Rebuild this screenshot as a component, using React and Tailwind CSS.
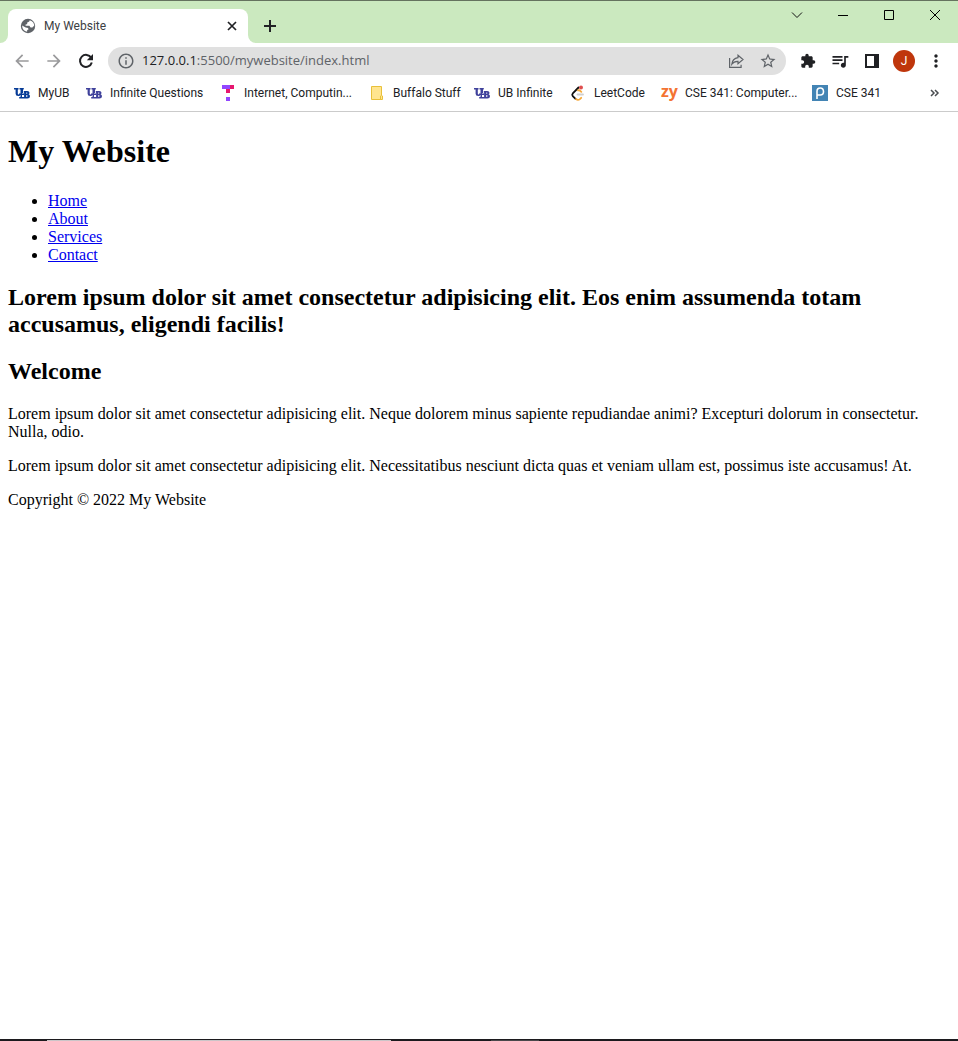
import React from 'react';
import {
  MdArrowBack, MdArrowForward, MdInfoOutline, MdExtension,
  MdStarBorder, MdQueueMusic, MdMoreVert,
} from 'react-icons/md';

const UbIcon = ({ color }) => (
  <svg width="16" height="16" viewBox="0 0 16 16" fill={color}>
    <path d="M0 3h4.500v1.500h-.7v4q0 1 1 1h1V11H4.200Q1.600 11 1.600 8.800V4.500H0z" />
    <path d="M5.500 3h4.300v1.500H9V8H6.500V4.500h-1z" />
    <path d="M5 8.600h5v1.300H5zM6.500 8H8v4H6.500z" />
    <path fillRule="evenodd" d="M9.800 6h3.400q2.300 0 2.300 1.800 0 1-.9 1.500 1.400.5 1.400 1.900 0 2.300-2.600 2.300H5.200V12h4.900V7.400h-.3zm2.500 1.400v1.300h.9V7.400zm0 2.700V12h1v-1.900z" />
  </svg>
);

const TopHatIcon = () => (
  <svg width="16" height="16" viewBox="0 0 16 16">
    <path fill="#9146ff" d="M2 0h8v4H2zM6 12h4v4H6z" />
    <path fill="#e6176f" d="M10 0h4v4h-4zM6 4h4v4H6z" />
  </svg>
);

const FolderIcon = () => (
  <svg width="16" height="16" viewBox="0 0 16 16" fill="#ffe58f" stroke="#e8c03a">
    <path d="M2.500 1.500h10v13h-10z" />
    <path d="M11.500 14.500v-3.500l1-.8 1 .8v3.500z" />
  </svg>
);

const LeetIcon = () => (
  <svg width="16" height="16" viewBox="0 0 16 16" fill="none" strokeWidth="1.800" strokeLinecap="round">
    <path stroke="#111" d="M8.500 2.500 2.800 8.300q-1.200 1.300 0 2.800l2.700 2.700" />
    <path stroke="#f5a83a" d="M6 14.100q2 1.400 3.900 0l1.300-1.300M8 5.400q1.300-.5 2.200.4l1.100 1.100" />
    <path stroke="#cfcfcf" d="M7.500 9.500h5.500" />
    <circle cx="11" cy="2.400" r="2" fill="#df4f4f" />
  </svg>
);

const ZyIcon = () => (
  <span className="w-4 pb-1 font-['Open_Sans',sans-serif] text-base leading-4 font-bold text-[#f47332]">zy</span>
);

const PIcon = () => (
  <svg width="16" height="16" viewBox="0 0 16 16" fill="none">
    <path fill="#4384b4" d="M0 0h16v16H0z" />
    <path stroke="#fff" strokeWidth="1.600" d="M5 14V6.500Q5 3 8.200 3t3.300 3.500-3.300 3.500H5" />
  </svg>
);

const GlobeIcon = () => (
  <svg width="16" height="16" viewBox="0 0 16 16">
    <circle cx="8" cy="8" r="7.200" fill="#5f6368" />
    <path fill="#fff" d="M9.700 2.200Q9.800 3.600 8.400 3.900L7.200 4.600V6L5.400 6.800q-.3 1 .8 1h3.200l1.200 1.600h1.900l.7-1.100 1 .2q.4-4.700-4.500-6.300Z" />
    <path fill="#fff" d="M2.100 7.600 5.700 9.400l2.400.7.400 1.300-1.300.7-.1 1.700Q2.300 12.900 2.100 7.600Z" />
  </svg>
);

const ShareIcon = () => (
  <svg width="16" height="16" viewBox="0 0 16 16" fill="none" stroke="#5f6368" strokeWidth="1.200">
    <path d="M1.600 5v9.400h11.500v-2.700" />
    <path d="M10 2.200 15 6.500l-5 4.300V8.400q-4-.2-6.200 2.800.6-5.600 6.200-6.500Z" />
  </svg>
);

const bookmarks = [
  { label: 'MyUB', width: 'w-[72px]', icon: <UbIcon color="#063b96" /> },
  { label: 'Infinite Questions', width: 'w-[134px]', icon: <UbIcon color="#3f419b" /> },
  { label: 'Internet, Computin...', width: 'w-[149px]', icon: <TopHatIcon /> },
  { label: 'Buffalo Stuff', width: 'w-[105px]', icon: <FolderIcon /> },
  { label: 'UB Infinite', width: 'w-24', icon: <UbIcon color="#3f419b" /> },
  { label: 'LeetCode', width: 'w-[91px]', icon: <LeetIcon /> },
  { label: 'CSE 341: Computer...', width: 'w-[151px]', icon: <ZyIcon /> },
  { label: 'CSE 341', width: 'w-[82px]', icon: <PIcon /> },
];

function TabStrip() {
  return (
    <div className="flex h-[43px] justify-between border-t border-[#65735f] bg-[#cbe9bf]">
      <div className="flex items-end">
        <div className="h-2 w-2 bg-white"><div className="h-2 w-2 rounded-br-lg bg-[#cbe9bf]" /></div>
        <div className="flex h-[34px] w-60 items-center rounded-t-lg bg-white pr-2 pl-3">
          <GlobeIcon />
          <span className="ml-2 grow text-xs text-[#3c4043]">My Website</span>
          <button aria-label="Close tab" className="grid h-4 w-4 place-items-center">
            <svg width="10" height="10" viewBox="0 0 10 10" stroke="#202124" strokeWidth="1.700"><path d="m1 1 8 8M9 1 1 9" /></svg>
          </button>
        </div>
        <div className="h-2 w-2 bg-white"><div className="h-2 w-2 rounded-bl-lg bg-[#cbe9bf]" /></div>
        <button aria-label="New tab" className="grid h-[34px] w-7 place-items-center">
          <svg width="12" height="12" viewBox="0 0 12 12" stroke="#202124" strokeWidth="2"><path d="M6 0v12M0 6h12" /></svg>
        </button>
      </div>
      <div className="flex h-7">
        <button aria-label="Search tabs" className="grid w-[46px] place-items-center">
          <svg width="12" height="12" viewBox="0 0 12 12" fill="none" stroke="#111"><path d="m1 3.500 5 5 5-5" /></svg>
        </button>
        <button aria-label="Minimize" className="grid w-[46px] place-items-center">
          <svg width="10" height="10" viewBox="0 0 10 10" stroke="#000"><path d="M0 5.500h10" /></svg>
        </button>
        <button aria-label="Maximize" className="grid w-[46px] place-items-center">
          <svg width="10" height="10" viewBox="0 0 10 10" fill="none" stroke="#000"><path d="M.5.500h9v9h-9z" /></svg>
        </button>
        <button aria-label="Close" className="grid w-[46px] place-items-center">
          <svg width="10" height="10" viewBox="0 0 10 10" stroke="#000"><path d="m0 0 10 10M10 0 0 10" /></svg>
        </button>
      </div>
    </div>
  );
}

function Toolbar() {
  return (
    <div className="flex h-9 items-center px-3 text-[#202124]">
      <div className="flex gap-3">
        <button aria-label="Back"><MdArrowBack size={20} color="#9a9a9c" /></button>
        <button aria-label="Forward"><MdArrowForward size={20} color="#9a9a9c" /></button>
        <button aria-label="Reload">
          <svg width="20" height="20" viewBox="0 0 20 20">
            <path d="M15.200 6.800A6 6 0 1 0 15.800 11.500" fill="none" stroke="#202124" strokeWidth="2" />
            <path d="M17 3v6.200h-6.200z" fill="#202124" />
          </svg>
        </button>
      </div>
      <div className="ml-3 flex h-7 grow items-center rounded-full bg-[#e0e0e0] px-[9px] text-[#5f6368]">
        <button aria-label="Site information"><MdInfoOutline size={18} /></button>
        <div className="ml-[7px] grow font-['Open_Sans',sans-serif] text-[13px]">
          <span className="text-[#202124]">127.0.0.1</span>:5500/mywebsite/index.html
        </div>
        <div className="flex items-center gap-[15px]">
          <button aria-label="Share"><ShareIcon /></button>
          <button aria-label="Bookmark this page"><MdStarBorder size={18} /></button>
        </div>
      </div>
      <div className="ml-[14px] flex items-center gap-[14px]">
        <button aria-label="Extensions"><MdExtension size={16} /></button>
        <button aria-label="Media"><MdQueueMusic size={20} /></button>
        <button aria-label="Side panel" className="px-px">
          <svg width="14" height="14" viewBox="0 0 14 14"><path fill="#202124" fillRule="evenodd" d="M0 0h14v14H0zM2 2v10h7V2z" /></svg>
        </button>
        <div className="-ml-px flex items-center gap-[11px]">
          <button aria-label="Profile" className="grid h-[22px] w-[22px] place-items-center rounded-full bg-[#bf360c] text-xs text-white">J</button>
          <button aria-label="Menu"><MdMoreVert size={20} /></button>
        </div>
      </div>
    </div>
  );
}

function BookmarksBar() {
  return (
    <div className="flex h-[33px] items-center border-b border-[#cbcbcb] pr-[18px] pb-1 pl-[6px] text-xs text-[#202124]">
      {bookmarks.map(({ label, width, icon }) => (
        <a key={label} href="#" className={`flex shrink-0 items-center gap-2 px-2 whitespace-nowrap ${width}`}>
          <span className="flex h-4 w-4 shrink-0 items-center">{icon}</span>
          {label}
        </a>
      ))}
      <button aria-label="More bookmarks" className="ml-auto">
        <svg width="10" height="8" viewBox="0 0 10 8" fill="none" stroke="#4a4d51" strokeWidth="1.500"><path d="m1 1 3 3-3 3M5 1l3 3-3 3" /></svg>
      </button>
    </div>
  );
}

function Page() {
  return (
    <main className="grow px-2 font-['Liberation_Serif',serif] text-base leading-[18px] text-black">
      <h1 className="mt-[21px] mb-[22px] text-[32px] leading-[37px] font-bold">My Website</h1>
      <ul className="list-disc pl-10">
        {['Home', 'About', 'Services', 'Contact'].map((item) => (
          <li key={item}><a href="#" className="text-[#0000ee] underline">{item}</a></li>
        ))}
      </ul>
      <h2 className="my-5 text-2xl leading-[27px] font-bold">
        Lorem ipsum dolor sit amet consectetur adipisicing elit. Eos enim assumenda totam accusamus, eligendi facilis!
      </h2>
      <h2 className="my-5 text-2xl leading-[27px] font-bold">Welcome</h2>
      <p className="my-4">
        Lorem ipsum dolor sit amet consectetur adipisicing elit. Neque dolorem minus sapiente repudiandae animi? Excepturi dolorum in consectetur. Nulla, odio.
      </p>
      <p className="my-4">
        Lorem ipsum dolor sit amet consectetur adipisicing elit. Necessitatibus nesciunt dicta quas et veniam ullam est, possimus iste accusamus! At.
      </p>
      <p className="my-4">Copyright © 2022 My Website</p>
    </main>
  );
}

export default function App() {
  return (
    <div className="flex min-h-screen flex-col bg-white font-[Roboto,'Open_Sans',sans-serif]">
      <TabStrip />
      <Toolbar />
      <BookmarksBar />
      <Page />
      <div className="h-[2px] bg-[#1c1a1e]">
        <div className="flex h-full items-end pl-[47px]">
          <div className="h-px w-[344px] bg-[#cbc5c8]" />
          <div className="ml-[100px] h-px w-12 bg-[#4a484b]" />
        </div>
      </div>
    </div>
  );
}
